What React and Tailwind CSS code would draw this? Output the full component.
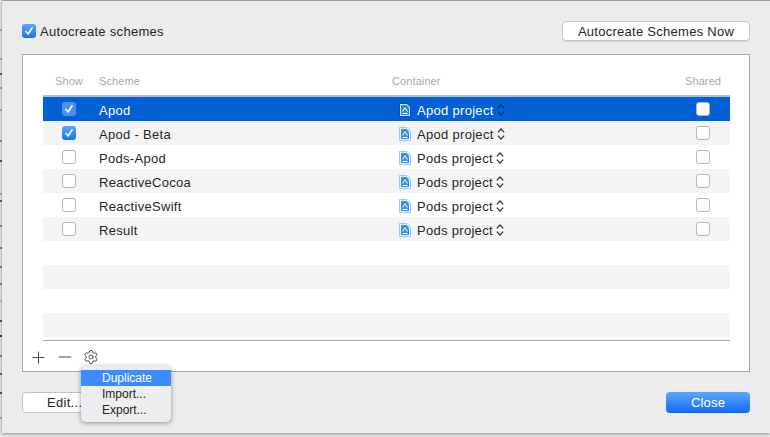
import React from "react";
import { Plus, Minus, Settings } from "lucide-react";

const rows = [
  ["Apod", "Apod project", true],
  ["Apod - Beta", "Apod project", true],
  ["Pods-Apod", "Pods project", false],
  ["ReactiveCocoa", "Pods project", false],
  ["ReactiveSwift", "Pods project", false],
  ["Result", "Pods project", false],
];

const ticks = [
  [29, "#a8a8a8"], [58, "#a8a8a8"], [73, "#5a4a8a"], [87, "#a8a8a8"], [109, "#a8a8a8"],
  [140, "#a58a6a"], [160, "#555555"], [193, "#a8a8a8"], [200, "#8a5a30"], [225, "#a58a6a"],
  [247, "#4a90c8"], [266, "#4a90c8"], [283, "#4a90c8"], [300, "#a0cbe8"], [320, "#555555"],
  [335, "#1a3a9a"], [355, "#4a90c8"], [373, "#8a5a30"], [392, "#555555"], [417, "#a8a8a8"],
];

function Check({ on, dim }) {
  const size = "w-[14px] h-[14px] rounded-[3px]";
  if (on)
    return (
      <span className={`${size} flex items-center justify-center ${dim ? "bg-[#4a90f5]" : "bg-gradient-to-b from-[#5aa5fb] to-[#1a74f5]"}`}>
        <svg width="10" height="10" viewBox="0 0 10 10" fill="none" stroke="#fff" strokeWidth="1.6" strokeLinecap="round" strokeLinejoin="round">
          <path d="M2 5.5 L4.2 8 L8 1.8" />
        </svg>
      </span>
    );
  return <span className={`${size} block bg-white border border-[#b5b5b5]`} />;
}

function Doc({ selected }) {
  const outline = selected ? "#0a4ea8" : "#9cc7ee";
  return (
    <svg width="12" height="14" viewBox="0 0 12 14" className="shrink-0">
      <path d="M0.5 0.5 H8 L11.5 4 V13.5 H0.5 Z" fill={selected ? "#d8e8fb" : "#e8f2fb"} stroke={outline} strokeWidth="1" />
      <path d="M2 2 H7.5 L10 4.5 V12 H2 Z" fill={selected ? "#2f86ea" : "#2f95ee"} />
      <path d="M3.5 8.5 L6 4.8 L8.5 8.5 M3.5 10.5 H8.5" fill="none" stroke="#fff" strokeWidth="1" />
    </svg>
  );
}

function UpDown({ selected }) {
  return (
    <svg width="8" height="12" viewBox="0 0 8 12" fill="none" stroke={selected ? "#0b2f66" : "#333333"} strokeWidth="1.2" className="ml-[3px] shrink-0">
      <path d="M0.8 4.4 L4 1 L7.2 4.4 M0.8 7.6 L4 11 L7.2 7.6" />
    </svg>
  );
}

function Row({ row, index }) {
  const selected = index === 0;
  const bg = selected ? "bg-[#0060d6] text-white" : index % 2 === 1 ? "bg-[#f4f4f4] text-[#262626]" : "bg-white text-[#262626]";
  return (
    <div className={`h-6 flex items-center text-[13px] tracking-[0.3px] ${bg}`}>
      <div className="w-[56px] pl-[19px] shrink-0"><Check on={row[2]} dim={selected} /></div>
      <div className="w-[293px] shrink-0 pt-[4px]">{row[0]}</div>
      <div className="w-[301px] shrink-0 flex items-center pt-[2px]">
        <span className="w-[25px] pl-[7px] shrink-0"><Doc selected={selected} /></span>
        <span className="pt-[2px]">{row[1]}</span>
        <UpDown selected={selected} />
      </div>
      <div className="pl-[3px]"><Check on={false} /></div>
    </div>
  );
}

export default function App() {
  return (
    <div className="relative w-[770px] h-[437px] bg-[#e6e6e6] overflow-hidden pl-[2px] font-['Liberation_Sans',sans-serif]">
      {ticks.map(([y, c]) => (
        <span key={y} className="absolute left-0 w-[2px] h-[2px]" style={{ top: y, backgroundColor: c }} />
      ))}
      <div className="relative w-[768px] h-[433px] bg-[#ececec] border-t border-t-[#9c9c9c] shadow-[0_1px_3px_rgba(0,0,0,0.4)] pl-[20px] pr-[20px] flex flex-col">
        <div className="h-[53px] flex items-center justify-between pt-[6px] shrink-0">
          <label className="flex items-center gap-[4px] text-[13px] tracking-[0.3px] text-[#262626]">
            <Check on />
            <span className="pt-[2px]">Autocreate schemes</span>
          </label>
          <button className="w-[188px] h-[20px] rounded-[4px] bg-white border border-[#c4c4c4] text-[13px] tracking-[0.27px] text-[#262626] shadow-[0_1px_0_rgba(0,0,0,0.1)]">
            Autocreate Schemes Now
          </button>
        </div>

        <div className="w-[728px] h-[318px] bg-white border border-[#a6a6a6] pl-[20px] pr-[19px] flex flex-col shrink-0">
          <div className="h-[42px] flex items-end pb-[6px] text-[11px] tracking-[0.1px] text-[#a8a8a8] border-b-2 border-b-[#bdbdbd] shrink-0">
            <span className="w-[56px] pl-[12px] shrink-0">Show</span>
            <span className="w-[293px] shrink-0">Scheme</span>
            <span className="w-[293px] shrink-0">Container</span>
            <span>Shared</span>
          </div>
          <div className="flex flex-col">
            {rows.map((r, i) => <Row key={r[0]} row={r} index={i} />)}
            <div className="h-6 bg-white" />
            <div className="h-6 bg-[#f4f4f4]" />
            <div className="h-6 bg-white" />
            <div className="h-6 bg-[#f4f4f4]" />
          </div>
          <div className="mt-[3px] border-t border-t-[#a6a6a6] flex-1 flex">
            <div className="-ml-[14px] pt-[2px] flex items-center gap-[7px] text-[#444444]">
              <Plus size={19} strokeWidth={1.25} />
              <Minus size={20} strokeWidth={1.2} />
              <Settings size={16} strokeWidth={1.4} className="ml-[1px]" />
            </div>
          </div>
        </div>

        <div className="flex justify-between mt-[20px]">
          <button className="w-[64px] h-[21px] rounded-[4px] bg-white border border-[#c4c4c4] text-[13px] tracking-[0.3px] text-[#262626] pl-[24px] text-left whitespace-nowrap">
            Edit...
          </button>
          <button className="w-[84px] h-[21px] rounded-[4px] bg-gradient-to-b from-[#5aa5fb] to-[#0f69fb] text-[13px] tracking-[0.2px] text-white">
            Close
          </button>
        </div>

        <div className="absolute left-[79px] top-[365px] w-[90px] h-[56px] rounded-[5px] bg-[#ededed] shadow-[0_1px_5px_rgba(0,0,0,0.4)] pt-[4px] text-[12px] text-[#262626]">
          <div className="h-4 bg-[#3d8bff] text-white pl-[21px] leading-4">Duplicate</div>
          <div className="h-4 pl-[21px] leading-4">Import...</div>
          <div className="h-4 pl-[21px] leading-4">Export...</div>
        </div>
      </div>
    </div>
  );
}
